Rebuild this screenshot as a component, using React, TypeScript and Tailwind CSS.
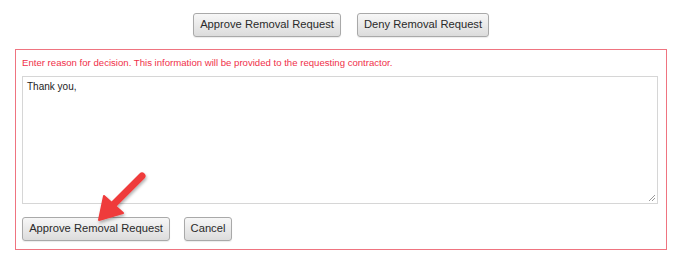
import React from "react";

const btn =
  "h-[24px] px-0 whitespace-nowrap rounded-[3px] border border-[#a9a9a9] bg-gradient-to-b from-[#f7f7f7] to-[#dcdcdc] text-[11.2px] text-[#2a2a2a] leading-none shadow-[0_1px_1px_rgba(0,0,0,0.08)]";

export default function App() {
  return (
    <div
      className="relative w-[678px] h-[267px] bg-white overflow-hidden"
      style={{ fontFamily: '"Liberation Sans", Arial, sans-serif' }}
    >
      <div className="flex justify-center gap-[16px] pt-[13px] pl-[4px]">
        <button className={`${btn} w-[148px]`}>Approve Removal Request</button>
        <button className={`${btn} w-[132px]`}>Deny Removal Request</button>
      </div>
      <div className="ml-[15px] mt-[12px] w-[652px] h-[201px] border-[1.5px] border-[#ef7480] px-[6px] pt-[7px] pb-[7px] flex flex-col">
        <div className="text-[9.6px] text-[#f0304a] leading-[12px] h-[13px] whitespace-nowrap">
          Enter reason for decision. This information will be provided to the requesting contractor.
        </div>
        <div className="relative mt-[6px] h-[128px] w-[636px] border border-[#d6d6d6] px-[4px] py-[3px]">
          <div className="text-[10px] text-[#222] leading-[14px]">Thank you,</div>
          <svg className="absolute right-[1px] bottom-[1px]" width="8" height="8" viewBox="0 0 8 8">
            <line x1="7" y1="1" x2="1" y2="7" stroke="#9a9a9a" strokeWidth="1" />
            <line x1="7" y1="4" x2="4" y2="7" stroke="#9a9a9a" strokeWidth="1" />
          </svg>
        </div>
        <div className="flex gap-[14px] mt-[13px]">
          <button className={`${btn} w-[148px]`}>Approve Removal Request</button>
          <button className={`${btn} w-[48px]`}>Cancel</button>
        </div>
      </div>
      <svg
        className="absolute left-0 top-0 pointer-events-none"
        width="678"
        height="267"
        viewBox="0 0 678 267"
      >
        <defs>
          <filter id="sh" x="-20%" y="-20%" width="140%" height="140%">
            <feDropShadow dx="1" dy="2" stdDeviation="1.5" floodColor="#000" floodOpacity="0.3" />
          </filter>
        </defs>
        <g filter="url(#sh)">
          <line x1="142" y1="176" x2="114" y2="204" stroke="#ef3b3b" strokeWidth="7" strokeLinecap="round" />
          <polygon points="99,220 104,196 123,213" fill="#ef3b3b" stroke="#ef3b3b" strokeWidth="2" strokeLinejoin="round" />
        </g>
      </svg>
    </div>
  );
}
